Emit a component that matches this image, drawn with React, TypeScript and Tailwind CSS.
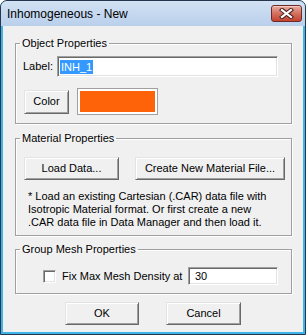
const raised =
  'bg-[#f0f0f0] border border-t-[#e3e3e3] border-l-[#e3e3e3] border-r-[#696969] border-b-[#696969] shadow-[inset_1px_1px_0_#ffffff,inset_-1px_-1px_0_#a0a0a0]';
const sunken =
  'bg-white border border-t-[#a0a0a0] border-l-[#a0a0a0] border-r-white border-b-white shadow-[inset_1px_1px_0_#696969,inset_-1px_-1px_0_#e3e3e3]';
const group =
  'border border-[#a0a0a0] shadow-[inset_1px_1px_0_#ffffff,1px_1px_0_#ffffff] ml-[12px] w-[277px] p-0';
const legend = 'ml-[4px] px-[2px] leading-[14px]';

function CloseButton() {
  return (
    <div className="w-[31px] h-[17px] mt-[4px] mr-[3px] rounded-[3px] border border-[#6b2a24] bg-gradient-to-b from-[#e9aa9f] via-[#d4705f] to-[#c5412f] shadow-[inset_0_1px_0_#f3cbc4] flex items-center justify-center">
      <svg width="15" height="11" viewBox="0 0 15 11">
        <path d="M3 2 L12 9 M12 2 L3 9" stroke="#4a2320" strokeWidth="4.2" strokeLinecap="square" />
        <path d="M3 2 L12 9 M12 2 L3 9" stroke="#ffffff" strokeWidth="2.2" strokeLinecap="square" />
      </svg>
    </div>
  );
}

export default function App() {
  return (
    <div className="w-[306px] h-[335px] flex flex-col bg-[#3db4e8] border border-[#25364d] rounded-t-[7px] overflow-hidden text-black font-['Liberation_Sans',Arial,sans-serif] text-[11px]">
      {/* title bar */}
      <div className="h-[25px] flex items-start justify-between bg-gradient-to-b from-[#d3e2f4] to-[#b9cfeb]">
        <span className="pl-[6px] pt-[5px] text-[12px] leading-[16px]">Inhomogeneous - New</span>
        <CloseButton />
      </div>

      {/* client area */}
      <div className="flex-1 mx-[2px] mb-[2px] bg-[#f0f0f0] flex flex-col">
        <fieldset className={group + ' mt-[10px]'}>
          <legend className={legend}>Object Properties</legend>
          <div className="flex items-center mt-[6px] pl-[7px]">
            <span className="w-[34px]">Label:</span>
            <div className={sunken + ' w-[221px] h-[21px] flex items-center pl-[2px]'}>
              <span className="bg-[#3399ff] text-white leading-[14px] px-[1px]">INH_1</span>
            </div>
          </div>
          <div className="flex items-center mt-[11px] pl-[8px] pb-[8px] gap-[8px]">
            <button className={raised + ' w-[45px] h-[24px] text-[11px]'}>Color</button>
            <div className="w-[81px] h-[27px] border border-[#a0a0a0] bg-white p-[2px]">
              <div className="w-full h-full bg-[#ff6309]" />
            </div>
          </div>
        </fieldset>

        <fieldset className={group + ' mt-[7px]'}>
          <legend className={legend}>Material Properties</legend>
          <div className="flex mt-[12px] pl-[8px] gap-[16px]">
            <button className={raised + ' w-[95px] h-[23px] text-[11px]'}>Load Data...</button>
            <button className={raised + ' w-[150px] h-[23px] text-[11px]'}>Create New Material File...</button>
          </div>
          <p className="mt-[10px] pl-[12px] pb-[6px] leading-[13px] whitespace-nowrap">
            * Load an existing Cartesian (.CAR) data file with
            <br />
            Isotropic Material format. Or first create a new
            <br />
            .CAR data file in Data Manager and then load it.
          </p>
        </fieldset>

        <fieldset className={group + ' mt-[6px]'}>
          <legend className={legend}>Group Mesh Properties</legend>
          <div className="flex items-center mt-[11px] pl-[27px] pr-[13px] pb-[8px]">
            <div className={sunken + ' w-[13px] h-[13px]'} />
            <span className="ml-[6px]">Fix Max Mesh Density at</span>
            <div className={sunken + ' ml-auto w-[90px] h-[18px] flex items-center pl-[6px]'}>30</div>
          </div>
        </fieldset>

        <div className="flex justify-center gap-[27px] mt-[8px]">
          <button className={raised + ' w-[74px] h-[23px] text-[11px]'}>OK</button>
          <button className={raised + ' w-[75px] h-[23px] text-[11px]'}>Cancel</button>
        </div>
      </div>
    </div>
  );
}
